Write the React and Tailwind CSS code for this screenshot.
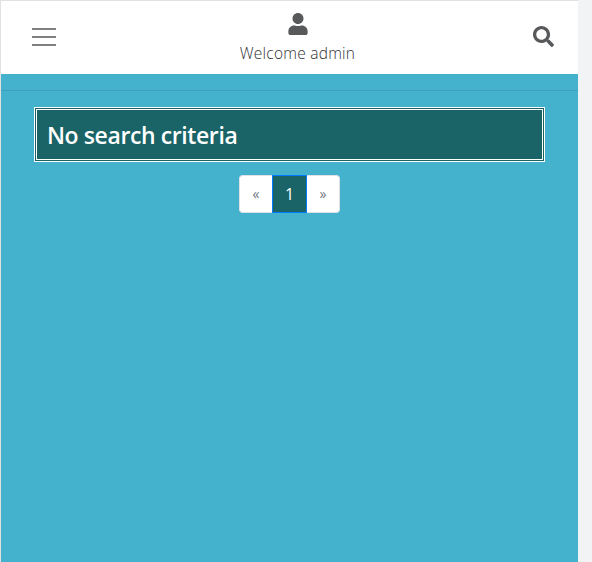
import { FaSearch, FaUser } from "react-icons/fa";

function Header() {
  return (
    <header className="flex h-[73px] justify-between bg-white pl-[31px] pr-6 text-[#58595b]">
      <button className="mt-[27px] flex h-[18px] w-6 flex-col justify-between" aria-label="Menu">
        <span className="h-0.5 w-6 bg-[#808080]" />
        <span className="h-0.5 w-6 bg-[#808080]" />
        <span className="h-0.5 w-6 bg-[#808080]" />
      </button>
      <div className="ml-1.5 flex w-[140px] flex-col items-center pt-3">
        <FaUser className="h-[22px] w-5" />
        <span className="mt-1.5 whitespace-nowrap text-[15.5px] leading-6 font-light tracking-[0.24px] text-[#303133]">
          Welcome admin
        </span>
      </div>
      <FaSearch className="mt-[25px] size-[21px]" />
    </header>
  );
}

function Pagination() {
  return (
    <nav className="mx-auto mt-[13px] flex h-[38px] w-[101px] text-base">
      <span className="flex w-[33px] items-center justify-center rounded-l border border-r-0 border-[#dee2e6] bg-white text-sm text-[#6c757d]">
        «
      </span>
      <span className="flex w-[35px] items-center justify-center border border-[#007bff] bg-[#1a6366] text-base text-white">
        1
      </span>
      <span className="flex w-[33px] items-center justify-center rounded-r border border-l-0 border-[#dee2e6] bg-white text-sm text-[#6c757d]">
        »
      </span>
    </nav>
  );
}

export default function App() {
  return (
    <div className="flex h-[562px] w-[592px] overflow-hidden bg-[#f1f3f5] font-['Open_Sans','Noto_Sans',sans-serif]">
      <div className="w-[578px] border-t border-l border-[#e1e1e1] bg-[#44b1cd]">
        <Header />
        <main>
          <hr className="mt-4 border-[#3d9fb9]" />
          <div className="mt-4 ml-[33px] flex h-[55px] w-[511px] items-center border-[3px] border-double border-white bg-[#1a6366] pt-0.5 pl-2.5">
            <h1 className="text-[23px] leading-none font-semibold tracking-[-0.4px] text-white">No search criteria</h1>
          </div>
          <Pagination />
        </main>
      </div>
    </div>
  );
}
